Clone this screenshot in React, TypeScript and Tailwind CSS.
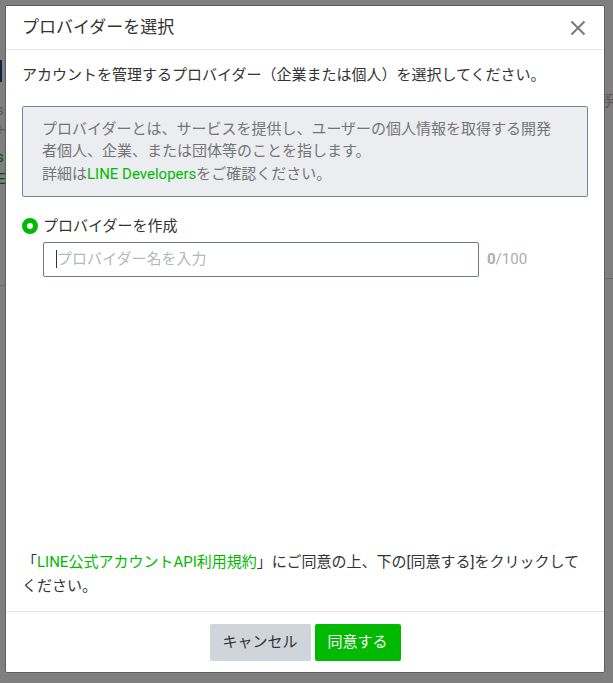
import React from "react";

const font = { fontFamily: "Roboto, 'Noto Sans CJK JP', sans-serif" };

function CloseIcon() {
  return (
    <svg width="16" height="16" viewBox="0 0 16 16" className="text-[#7b7b7b]">
      <path d="M1.5 1.5 L14.5 14.5 M14.5 1.5 L1.5 14.5" stroke="currentColor" strokeWidth="2" />
    </svg>
  );
}

export default function App() {
  return (
    <div style={font} className="relative h-[683px] w-[613px] overflow-hidden bg-white">
      {/* page behind the overlay */}
      <div className="flex h-full">
        <div className="flex w-[6px] flex-col overflow-visible text-[15px] leading-[22px]">
          <div className="mt-[60px] h-[22px] w-[2px] bg-[#1f4f8a]" />
          <div className="mt-[17px] -ml-[4px] text-[#b0b0b0]">s</div>
          <div className="-ml-[8px] text-[#b0b0b0]">ナ</div>
          <div className="mt-[3px] -ml-[4px] text-[#00a000]">s</div>
          <div className="-ml-[3px] text-[#00a000]">E</div>
          <div className="mt-[95px] h-px w-[6px] bg-[#d8d8d8]" />
        </div>
        <div className="flex-1" />
        <div className="flex w-[9px] flex-col text-[15px]">
          <div className="mt-[90px] text-[#b0b0b0]">発</div>
          <div className="mt-[165px] h-px w-full bg-[#d8d8d8]" />
        </div>
      </div>

      {/* overlay + modal */}
      <div className="fixed inset-0 bg-black/50 pl-[5px] pt-[5px]">
        <div className="flex h-[668px] w-[600px] flex-col rounded-[2px] border border-[#5e5e5e] bg-white text-[#333]">
          <div className="flex h-[44px] shrink-0 items-center justify-between border-b border-[#e6e6e6] pl-[16px] pr-[18px]">
            <h1 className="text-[17px] font-normal">プロバイダーを選択</h1>
            <CloseIcon />
          </div>

          <div className="flex flex-1 flex-col px-[16px] pt-[14px]">
            <p className="text-[15px] leading-[22.5px]">
              アカウントを管理するプロバイダー（企業または個人）を選択してください。
            </p>

            <div className="mt-[19px] rounded-[2px] border border-[#7a8296] bg-[#ebedf0] py-[11px] pl-[19px] text-[15px] leading-[22.5px] text-[#757575]">
              <p>プロバイダーとは、サービスを提供し、ユーザーの個人情報を取得する開発</p>
              <p>者個人、企業、または団体等のことを指します。</p>
              <p>
                詳細は<span className="text-[#00b900]">LINE Developers</span>をご確認ください。
              </p>
            </div>

            <div className="mt-[18px] flex items-center gap-[5px]">
              <span className="h-[16px] w-[16px] rounded-full border-[5px] border-[#00b900] bg-white" />
              <span className="text-[15px] leading-[22.5px]">プロバイダーを作成</span>
            </div>

            <div className="mt-[4px] ml-[21px] flex items-center gap-[8px]">
              <div className="flex h-[35px] w-[436px] items-center rounded-[2px] border border-[#6d7793] bg-white pl-[12px]">
                <span className="h-[18px] w-px bg-[#333]" />
                <input
                  className="w-full bg-transparent text-[15px] text-[#333] outline-none placeholder:text-[#b3b7bf]"
                  style={font}
                  placeholder="プロバイダー名を入力"
                />
              </div>
              <span className="text-[15px] text-[#a9adb4]">
                <b className="font-bold">0</b>/100
              </span>
            </div>

            <div className="flex-1" />

            <p className="pb-[13px] text-[15px] leading-[24px]">
              「<span className="text-[#00b900]">LINE公式アカウントAPI利用規約</span>」にご同意の上、下の[同意する]をクリックして
              <br />
              ください。
            </p>
          </div>

          <div className="flex shrink-0 items-center justify-center gap-[4px] border-t border-[#e6e6e6] pb-[11px] pt-[12px]">
            <button className="h-[37px] w-[101px] rounded-[2px] bg-[#d0d4db] text-[15px] text-[#333]">
              キャンセル
            </button>
            <button className="h-[37px] w-[86px] rounded-[2px] bg-[#00b900] text-[15px] text-white">
              同意する
            </button>
          </div>
        </div>
      </div>
    </div>
  );
}
